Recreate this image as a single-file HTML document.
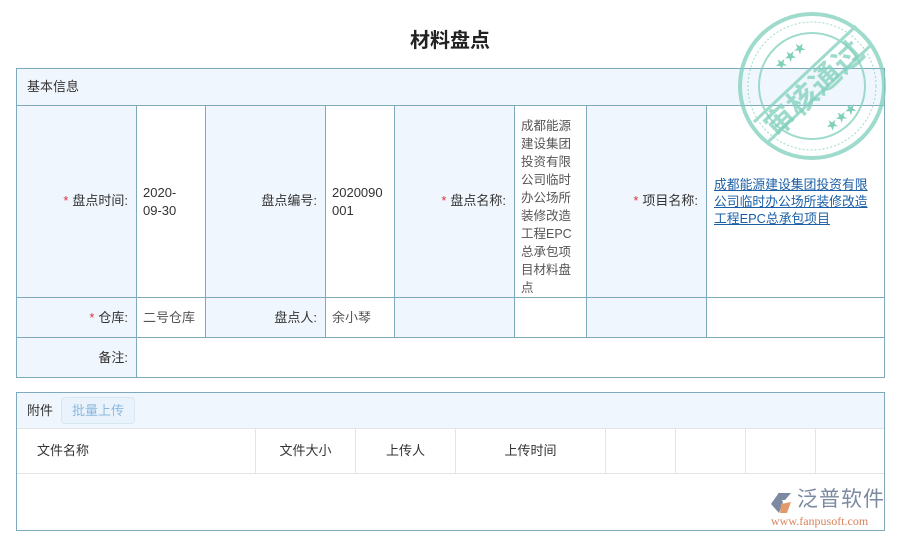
<!DOCTYPE html>
<html><head><meta charset="utf-8"><style>
*{margin:0;padding:0;box-sizing:border-box}
body{width:900px;height:538px;background:#fff;font-family:"Liberation Sans","Noto Sans CJK SC",sans-serif;font-size:13px;color:#333;position:relative;overflow:hidden}
.a{position:absolute}
.lb{background:#f0f6fd}
.c{position:absolute;border-right:1px solid #7fa9bd;border-bottom:1px solid #7fa9bd}
.r{text-align:right;padding-right:8px}
.s{color:#d9363e;margin-right:4px}
.lk{color:#1a5fa8;text-decoration:underline}
.th{position:absolute;top:429px;height:45px;line-height:44px;border-right:1px solid #e4e4e4;border-bottom:1px solid #e4e4e4;text-align:center}
</style></head><body>
<div class="a" style="left:0;top:24px;width:900px;text-align:center;font-size:20px;font-weight:bold;color:#222">材料盘点</div>

<div class="a lb" style="left:16px;top:68px;width:869px;height:310px;border:1px solid #7fa9bd"></div>
<div class="a" style="left:17px;top:69px;width:867px;height:37px;border-bottom:1px solid #7fa9bd;line-height:36px;padding-left:10px">基本信息</div>

<div class="c lb r" style="left:17px;top:106px;width:120px;height:192px;line-height:190px"><span class="s">*</span>盘点时间:</div>
<div class="c" style="left:137px;top:106px;width:69px;height:192px;background:#fff;padding:78px 0 0 6px;line-height:18px">2020-<br>09-30</div>
<div class="c lb r" style="left:206px;top:106px;width:120px;height:192px;line-height:190px">盘点编号:</div>
<div class="c" style="left:326px;top:106px;width:69px;height:192px;background:#fff;padding:78px 0 0 6px;line-height:18px">2020090<br>001</div>
<div class="c lb r" style="left:395px;top:106px;width:120px;height:192px;line-height:190px"><span class="s">*</span>盘点名称:</div>
<div class="c" style="left:515px;top:106px;width:72px;height:192px;background:#fff;padding:11px 0 0 6px;line-height:18px;font-size:12.5px;color:#555">成都能源<br>建设集团<br>投资有限<br>公司临时<br>办公场所<br>装修改造<br>工程EPC<br>总承包项<br>目材料盘<br>点</div>
<div class="c lb r" style="left:587px;top:106px;width:120px;height:192px;line-height:190px"><span class="s">*</span>项目名称:</div>
<div class="c" style="left:707px;top:106px;width:178px;height:192px;background:#fff;padding:70px 0 0 7px;line-height:17px;font-size:12.8px;white-space:nowrap"><span class="lk">成都能源建设集团投资有限</span><br><span class="lk">公司临时办公场所装修改造</span><br><span class="lk">工程EPC总承包项目</span></div>

<div class="c lb r" style="left:17px;top:298px;width:120px;height:40px;line-height:40px"><span class="s">*</span>仓库:</div>
<div class="c" style="left:137px;top:298px;width:69px;height:40px;background:#fff;line-height:40px;padding-left:6px;color:#555">二号仓库</div>
<div class="c lb r" style="left:206px;top:298px;width:120px;height:40px;line-height:40px">盘点人:</div>
<div class="c" style="left:326px;top:298px;width:69px;height:40px;background:#fff;line-height:40px;padding-left:6px;color:#555">余小琴</div>
<div class="c lb" style="left:395px;top:298px;width:120px;height:40px"></div>
<div class="c" style="left:515px;top:298px;width:72px;height:40px;background:#fff"></div>
<div class="c lb" style="left:587px;top:298px;width:120px;height:40px"></div>
<div class="c" style="left:707px;top:298px;width:178px;height:40px;background:#fff"></div>

<div class="a lb r" style="left:17px;top:338px;width:120px;height:39px;line-height:39px;border-right:1px solid #7fa9bd">备注:</div>
<div class="a" style="left:137px;top:338px;width:747px;height:39px;background:#fff"></div>

<div class="a" style="left:16px;top:392px;width:869px;height:139px;border:1px solid #7fa9bd;background:#fff"></div>
<div class="a lb" style="left:17px;top:393px;width:867px;height:36px;border-bottom:1px solid #e4e4e4;line-height:35px;padding-left:10px">附件</div>
<div class="a" style="left:61px;top:397px;width:74px;height:27px;border:1px solid #d6e6f3;border-radius:4px;background:#eaf3fb;color:#8ab8df;text-align:center;line-height:25px">批量上传</div>
<div class="th" style="left:17px;width:239px;text-align:left;padding-left:20px">文件名称</div>
<div class="th" style="left:256px;width:100px">文件大小</div>
<div class="th" style="left:356px;width:100px">上传人</div>
<div class="th" style="left:456px;width:150px">上传时间</div>
<div class="th" style="left:606px;width:70px"></div>
<div class="th" style="left:676px;width:70px"></div>
<div class="th" style="left:746px;width:70px"></div>
<div class="th" style="left:816px;width:68px;border-right:none"></div>

<svg class="a" style="left:734px;top:10px" width="156" height="156" viewBox="0 0 156 156">
<g fill="none" stroke="#7fd0bb" opacity="0.75">
<circle cx="78" cy="76" r="72" stroke-width="4"/>
<circle cx="78" cy="76" r="64" stroke-width="1" stroke-dasharray="2 2"/>
<circle cx="78" cy="76" r="53" stroke-width="2"/>
<path d="M20 112 L122 16 M34 132 L136 36" stroke-width="3"/>
</g>
<text x="78" y="90" font-size="30" font-weight="bold" fill="#7fd0bb" opacity="0.75" text-anchor="middle" transform="rotate(-43 78 76)" font-family="Noto Sans CJK SC,sans-serif" letter-spacing="1">审核通过</text>
<text x="42" y="62" font-size="12" fill="#7fd0bb" transform="rotate(-40 42 57)">★★★</text>
<text x="92" y="118" font-size="12" fill="#7fd0bb" transform="rotate(-40 99 114)">★★★</text>
</svg>

<svg class="a" style="left:770px;top:492px" width="26" height="22" viewBox="0 0 26 22">
<path d="M8 1 L21 1 L15 8 L8 8 Z" fill="#7b8aa0"/>
<path d="M1 12 L8 2 L13 10 L9 21 Z" fill="#7b8aa0"/>
<path d="M11 12 L21 10 L17 21 L10 21 Z" fill="#e39a6a"/>
</svg>
<div class="a" style="left:797px;top:487px;font-size:21px;line-height:26px;color:#7b8aa0;letter-spacing:1px">泛普软件</div>
<div class="a" style="left:771px;top:514px;font-size:12px;line-height:14px;color:#d8835a;font-family:'Liberation Serif',serif">www.fanpusoft.com</div>
</body></html>
